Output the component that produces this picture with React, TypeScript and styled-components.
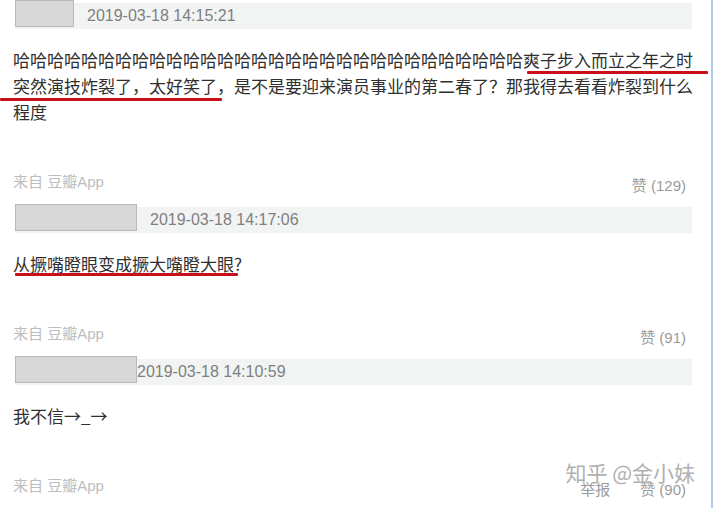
import styled, { createGlobalStyle } from "styled-components";

const GlobalStyle = createGlobalStyle`
  html, body {
    margin: 0;
    padding: 0;
    background: #ffffff;
  }
  body {
    font-family: "Liberation Sans", "Noto Sans CJK SC", sans-serif;
  }
`;

const Page = styled.div`
  position: relative;
  width: 713px;
  height: 508px;
  overflow: hidden;
  border-right: 2px solid #aecbef;
  background: #ffffff;
  padding-top: 3px;
  box-sizing: border-box;
`;

const Comment = styled.div`
  display: flex;
  flex-direction: column;
  & + & {
    margin-top: 10px;
  }
`;

const Header = styled.div<{ $gap: number }>`
  display: flex;
  align-items: center;
  gap: ${(p) => p.$gap}px;
  height: 26px;
  margin: 0 19px 0 15px;
  background: #f2f4f4;
`;

const Avatar = styled.div<{ $w: number }>`
  align-self: flex-start;
  flex: none;
  width: ${(p) => p.$w}px;
  height: 27px;
  margin-top: -3px;
  box-sizing: border-box;
  background: #d7d7d7;
  border: 1px solid #b9b9b9;
`;

const Time = styled.span`
  font-size: 16px;
  color: #7f7f7f;
`;

const Body = styled.div`
  margin-top: 18px;
  padding: 0 18px 0 13px;
  font-family: "Noto Sans CJK SC", "Liberation Sans", sans-serif;
  font-size: 17px;
  line-height: 26px;
  color: #2f2f2f;
  word-break: break-all;
`;

// hand-drawn red annotation under a run of text
const Mark = styled.span<{ $left: number; $right: number; $drop: number }>`
  position: relative;
  &::after {
    content: "";
    position: absolute;
    left: ${(p) => -p.$left}px;
    right: ${(p) => -p.$right}px;
    bottom: ${(p) => -p.$drop}px;
    height: 3px;
    border-radius: 1px;
    background: #c90f18;
  }
`;

const Footer = styled.div`
  display: flex;
  align-items: flex-start;
  justify-content: space-between;
  margin-top: 47px;
  padding: 0 25px 0 13px;
  height: 25px;
  font-size: 15px;
  line-height: 20px;
`;

const Source = styled.span`
  color: #bdbdbd;
`;

const Actions = styled.div`
  display: flex;
  gap: 30px;
  padding-top: 4px;
  color: #9a9a9a;
`;

const Watermark = styled.div`
  position: absolute;
  right: 16px;
  bottom: 24px;
  font-family: "Noto Sans CJK SC", sans-serif;
  font-size: 21px;
  line-height: 24px;
  color: #a8a8a8;
  text-shadow: 0 0 2px #ffffff, 0 0 2px #ffffff;
  opacity: 0.9;
`;

const ha = "哈".repeat(30);

const App = () => {
  return (
    <>
      <GlobalStyle />
      <Page>
        <Comment>
          <Header $gap={13}>
            <Avatar $w={59} />
            <Time>2019-03-18 14:15:21</Time>
          </Header>
          <Body>
            {ha}
            <Mark $left={-4} $right={15} $drop={2}>
              爽子步入而立之年之时
            </Mark>
            <Mark $left={13} $right={-12} $drop={3}>
              突然演技炸裂了，太好笑了，
            </Mark>
            是不是要迎来演员事业的第二春了？那我得去看看炸裂到什么程度
          </Body>
          <Footer>
            <Source>来自 豆瓣App</Source>
            <Actions>
              <span>赞 (129)</span>
            </Actions>
          </Footer>
        </Comment>

        <Comment>
          <Header $gap={13}>
            <Avatar $w={122} />
            <Time>2019-03-18 14:17:06</Time>
          </Header>
          <Body>
            <Mark $left={-2} $right={-4} $drop={0}>
              从撅嘴瞪眼变成撅大嘴瞪大眼?
            </Mark>
          </Body>
          <Footer>
            <Source>来自 豆瓣App</Source>
            <Actions>
              <span>赞 (91)</span>
            </Actions>
          </Footer>
        </Comment>

        <Comment>
          <Header $gap={0}>
            <Avatar $w={122} />
            <Time>2019-03-18 14:10:59</Time>
          </Header>
          <Body>我不信→_→</Body>
          <Footer>
            <Source>来自 豆瓣App</Source>
            <Actions>
              <span>举报</span>
              <span>赞 (90)</span>
            </Actions>
          </Footer>
        </Comment>

        <Watermark>知乎 @金小妹</Watermark>
      </Page>
    </>
  );
};

export default App;
